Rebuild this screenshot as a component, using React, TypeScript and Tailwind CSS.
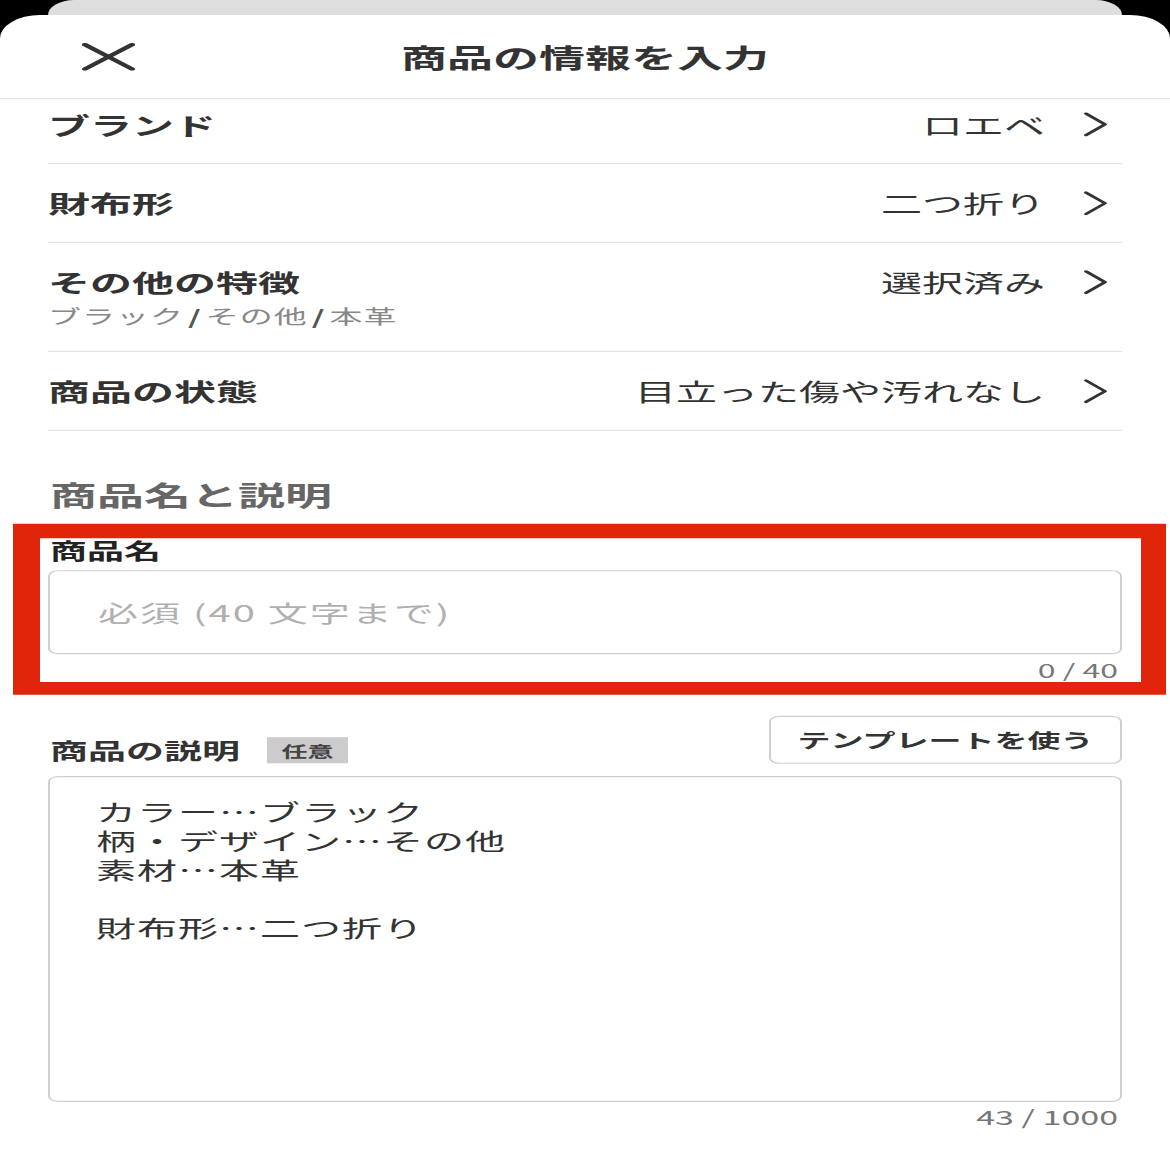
import React from "react";

const rows = [
  { label: "ブランド", value: "ロエベ" },
  { label: "財布形", value: "二つ折り" },
  { label: "その他の特徴", value: "選択済み", sub: ["ブラック", "その他", "本革"] },
  { label: "商品の状態", value: "目立った傷や汚れなし" },
];

function Chevron() {
  return (
    <svg width="25" height="43" viewBox="0 0 25 43" className="shrink-0">
      <polyline points="3,3 22,21.5 3,40" fill="none" stroke="#333" strokeWidth="4" strokeLinecap="round" strokeLinejoin="round" />
    </svg>
  );
}

function CloseIcon() {
  return (
    <svg width="53" height="48" viewBox="0 0 53 48">
      <line x1="3" y1="3" x2="50" y2="45" stroke="#333" strokeWidth="6" strokeLinecap="round" />
      <line x1="50" y1="3" x2="3" y2="45" stroke="#333" strokeWidth="6" strokeLinecap="round" />
    </svg>
  );
}

function Row(props: { label: string; value: string; sub?: string[]; first?: boolean }) {
  if (props.sub) {
    return (
      <div className="h-[188px] flex items-start justify-between pt-[43px] border-b-2 border-[#e4e4e4]">
        <div className="flex flex-col">
          <span className="text-[42px] leading-[48px] font-bold text-[#333]">{props.label}</span>
          <span className="text-[33px] leading-[40px] mt-[14px] text-[#888] tracking-[1px]">
            {props.sub.map((s, i) => (
              <span key={s}>
                {i > 0 && <span className="mx-[4px] font-bold text-[#555]">/</span>}
                {s}
              </span>
            ))}
          </span>
        </div>
        <div className="flex items-center gap-[38px] pr-[14px]">
          <span className="text-[41px] leading-[48px] text-[#333]">{props.value}</span>
          <Chevron />
        </div>
      </div>
    );
  }
  return (
    <div
      className={
        props.first
          ? "h-[112px] pb-[24px] flex items-center justify-between border-b-2 border-[#e4e4e4]"
          : "h-[136px] flex items-center justify-between border-b-2 border-[#e4e4e4]"
      }
    >
      <span className="text-[42px] leading-[48px] font-bold text-[#333]">{props.label}</span>
      <div className="flex items-center gap-[38px] pr-[14px]">
        <span className="text-[41px] leading-[48px] text-[#333]">{props.value}</span>
        <Chevron />
      </div>
    </div>
  );
}

export default function App() {
  return (
    <div className="w-[1170px] h-[1170px] overflow-hidden bg-black">
      <div className="w-[1170px] h-[2017px] origin-top scale-y-[0.58] bg-black font-['Noto_Sans_CJK_JP',sans-serif]">
        <div className="mx-[48px] h-[26px] rounded-t-[28px] bg-[#dedede]" />
        <div className="bg-white rounded-t-[40px] h-[2100px]">
          <div className="h-[145px] flex items-center px-[82px] border-b-2 border-[#e2e2e2]">
            <CloseIcon />
            <span className="flex-1 text-center text-[46px] leading-[56px] font-bold text-[#333] -ml-[53px] -mr-[82px] pr-[82px]">
              商品の情報を入力
            </span>
          </div>

          <div className="px-[48px]">
            {rows.map((r, i) => (
              <Row key={r.label} label={r.label} value={r.value} sub={r.sub} first={i == 0} />
            ))}

            <div className="mt-[82px] text-[47px] leading-[56px] font-bold text-[#666] pl-[2px]">
              商品名と説明
            </div>

            <div className="mt-[22px] -ml-[35px] -mr-[44px] border-[#e1250b] border-l-[27px] border-r-[25px] border-t-[25px] border-b-[22px] pl-[8px] pr-[19px] pb-[3px]">
              <div className="text-[37px] leading-[40px] font-bold text-[#222] pl-[2px]">商品名</div>
              <div className="mt-[15px] h-[145px] rounded-[10px] border-2 border-[#cfcfcf] flex items-center pl-[48px]">
                <span className="text-[40px] tracking-[2px] text-[#b0b0b0]">必須 (40 文字まで)</span>
              </div>
              <div className="mt-[9px] text-right text-[32px] leading-[36px] text-[#777] pr-[4px]">0 / 40</div>
            </div>

            <div className="mt-[36px] flex items-end justify-between">
              <div className="flex items-center gap-[27px] pl-[2px]">
                <span className="text-[38px] leading-[48px] font-bold text-[#333]">商品の説明</span>
                <span className="h-[45px] w-[81px] bg-[#cccccc] flex items-center justify-center text-[26px] font-bold text-[#444]">
                  任意
                </span>
              </div>
              <div className="h-[83px] w-[353px] rounded-[10px] border-2 border-[#cfcfcf] flex items-center justify-center text-[33px] font-bold text-[#333]">
                テンプレートを使う
              </div>
            </div>

            <div className="mt-[21px] h-[562px] rounded-[10px] border-2 border-[#cfcfcf] pt-[34px] pl-[46px] text-[40px] leading-[50px] tracking-[1px] text-[#333]">
              <div>カラー…ブラック</div>
              <div>柄・デザイン…その他</div>
              <div>素材…本革</div>
              <div className="h-[50px]" />
              <div>財布形…二つ折り</div>
            </div>

            <div className="mt-[5px] text-right text-[34px] leading-[40px] text-[#777] pr-[4px]">43 / 1000</div>
          </div>
        </div>
      </div>
    </div>
  );
}
